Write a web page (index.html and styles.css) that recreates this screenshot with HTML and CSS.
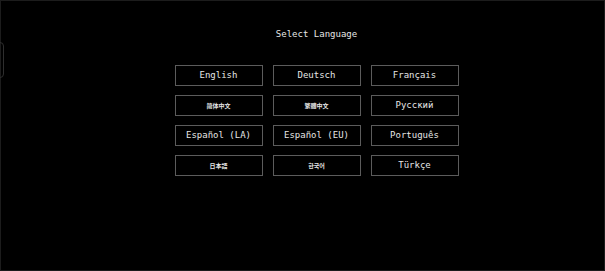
FILE: index.html
```html
<!DOCTYPE html>
<html lang="en">
<head>
    <meta charset="UTF-8">
    <meta name="viewport" content="width=device-width, initial-scale=1.0">
    <title>Select Language</title>
    <link rel="stylesheet" href="styles.css">
</head>
<body>
    <div class="aba"></div>
    <main class="tela">
        <h1 class="titulo">Select Language</h1>
        <section class="idiomas">
            <button class="idioma">English</button>
            <button class="idioma">Deutsch</button>
            <button class="idioma">Français</button>
            <button class="idioma"><span class="cjk" lang="zh-Hans">简体中文</span></button>
            <button class="idioma"><span class="cjk" lang="zh-Hant">繁體中文</span></button>
            <button class="idioma">Русский</button>
            <button class="idioma">Español (LA)</button>
            <button class="idioma">Español (EU)</button>
            <button class="idioma">Português</button>
            <button class="idioma"><span class="cjk" lang="ja">日本語</span></button>
            <button class="idioma"><span class="cjk" lang="ko">한국어</span></button>
            <button class="idioma">Türkçe</button>
        </section>
    </main>
</body>
</html>
```

FILE: styles.css
```css
:root {
    --fundo: #000000;
    --texto: #e6e6e6;
    --borda: #5c5c5c;
}

* {
    font-family: 'DejaVu Sans Mono', 'Liberation Mono', 'Noto Sans CJK SC', monospace;
    padding: 0px;
    margin: 0px;
    box-sizing: border-box;
}

html,
body {
    background-color: var(--fundo);
    height: 100vh;
    overflow: hidden;
}

body {
    border: 1px solid #1c1c1c;
}

/* pedaço do painel lateral que fica escondido na borda */
.aba {
    position: absolute;
    left: -20px;
    top: 42px;
    width: 24px;
    height: 36px;
    border: 1px solid #2e2e2e;
    border-radius: 4px;
}

.tela {
    display: flex;
    flex-direction: column;
    align-items: center;
    padding-top: 28px;
    padding-left: 28px;
}

.titulo {
    color: var(--texto);
    font-size: 9px;
    font-weight: normal;
    line-height: 11px;
    margin-bottom: 25px;
}

.idiomas {
    display: grid;
    grid-template-columns: repeat(3, 88px);
    grid-auto-rows: 21px;
    column-gap: 10px;
    row-gap: 9px;
}

.idioma {
    background-color: transparent;
    color: var(--texto);
    border: 1px solid var(--borda);
    font-size: 9px;
    line-height: 11px;
    display: flex;
    justify-content: center;
    align-items: center;
    padding-bottom: 1px;
}

.cjk {
    font-family: 'Noto Sans CJK SC', 'Noto Sans CJK JP', 'Noto Sans CJK KR', sans-serif;
    font-size: 6px;
    font-weight: bold;
}
```
